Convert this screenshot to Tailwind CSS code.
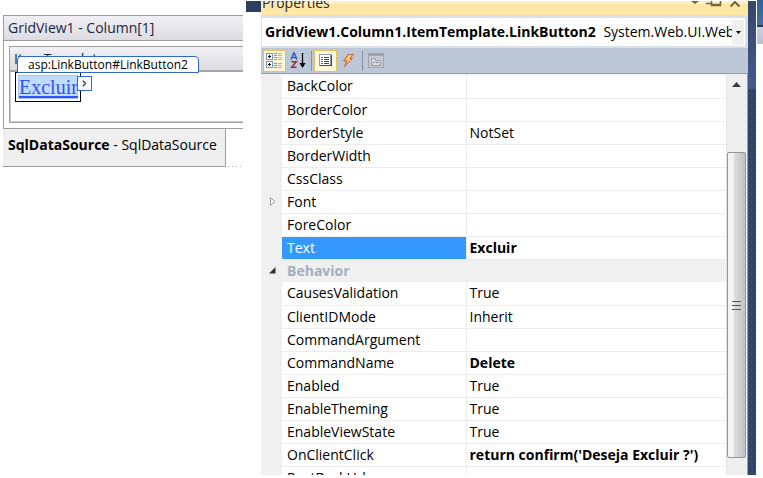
<!DOCTYPE html>
<html lang="en">
<head>
<meta charset="utf-8">
<title>Properties</title>
<script src="https://cdn.jsdelivr.net/npm/@tailwindcss/browser@4"></script>
</head>
<body class="flex h-screen overflow-hidden bg-white pt-px pb-[3px] font-['Open_Sans','Noto_Sans',sans-serif] text-sm text-black">

<main class="w-[246px] shrink-0 pt-[14px] pl-[3px] pr-[3px]">
  <section class="border border-r-0 border-[#9d9d9d]">
    <h1 class="h-[25px] border-b border-[#9d9d9d] bg-linear-to-b from-[#f1f1f5] to-[#dcdce0] pl-1 text-sm leading-6 text-[#1c2440]">GridView1 - Column[1]</h1>
    <div class="pt-[5px] pb-[5px] pl-[5px]">
      <div class="relative border border-r-0 border-[#9d9d9d]">
        <h2 class="h-[25px] border-b-2 border-[#a5a5a5] bg-linear-to-b from-[#f1f1f5] to-[#dcdce0] pl-1 text-sm leading-6 text-[#1c2440]">ItemTemplate</h2>
        <div class="h-[50px] border-b border-l border-[#d0d0d0] pl-1">
          <div class="relative h-[30px] w-[66px] border border-black p-[2px]">
            <a href="#" class="block h-6 border border-[#a3c6ee] bg-[#bfdcfd] font-['Liberation_Serif',serif] text-xl leading-[22px] text-[#3352ff] underline underline-offset-2">Excluir</a>
            <button type="button" aria-label="Smart tasks" class="absolute top-[3px] left-[61px] flex size-[15px] items-center justify-center border border-[#316ac5] bg-[#f7f9fc]">
              <svg width="5" height="7" viewBox="0 0 5 7" fill="none" stroke="#26385c" stroke-width="1.2"><path d="M.8.8 3.6 3.5.8 6.2"/></svg>
            </button>
          </div>
        </div>
        <div class="absolute top-[9px] left-[7px] h-[17px] w-[182px] rounded-t border border-[#316ac5] bg-white text-center text-xs leading-[15px] whitespace-nowrap">asp:LinkButton#LinkButton2</div>
      </div>
    </div>
  </section>
  <div class="flex items-end gap-[2px]">
    <section class="h-[38px] w-[223px] shrink-0 border-r border-b border-[#9d9d9d] bg-[#efefef] pl-[5px] leading-8 whitespace-nowrap"><b>SqlDataSource</b> - SqlDataSource</section>
    <div class="h-px w-[13px] bg-[repeating-linear-gradient(to_right,#b8b8b8_0_1px,transparent_1px_4px)]"></div>
  </div>
</main>

<div class="h-[11px] w-[15px] shrink-0 bg-[#2c3e60]"></div>

<aside class="flex min-w-0 flex-1 flex-col overflow-hidden bg-[#d9e0ea]">
  <header class="flex h-[14px] shrink-0 items-start justify-between overflow-hidden bg-linear-to-b from-[#fff3c8] to-[#ffe8a6] to-30% pr-[6px] pl-px">
    <h2 class="-mt-2 text-sm leading-5 text-[#26282c]">Properties</h2>
    <svg width="52" height="7" viewBox="0 0 52 7" fill="none" stroke="#75633d"><path d="M1 0h8L5 3z" fill="#75633d" stroke="none"/><path d="M16 2.500h5M21.500 0v4.500h9V0M22 3.500h8" stroke-width="1.500"/><path d="M40.500 5.500 45 1l4.500 4.500" stroke-width="2"/></svg>
  </header>

  <div class="mt-[3px] mr-[3px] mb-[2px] ml-px flex h-7 shrink-0 items-center bg-white">
    <button type="button" class="flex h-full w-full items-center overflow-hidden pl-[3px] text-left">
      <span class="min-w-0 flex-1 overflow-hidden whitespace-nowrap"><b class="mr-1">GridView1.Column1.ItemTemplate.LinkButton2</b> System.Web.UI.WebControls.LinkButton</span>
      <span class="mr-px flex h-[25px] w-3 shrink-0 items-center justify-center bg-[#f0f0f0]"><svg width="5" height="3" viewBox="0 0 5 3"><path d="M0 0h5L2.500 3z"/></svg></span>
    </button>
  </div>

  <div class="flex h-[25px] shrink-0 items-center bg-[#bcc7d8] pl-[2px]">
    <button type="button" aria-label="Categorized" class="flex h-[22px] w-[23px] items-center justify-center border border-[#e5c365] bg-[#fff7da]">
      <svg width="17" height="17" viewBox="0 0 17 17" fill="none" shape-rendering="crispEdges"><g stroke="#6d9ad0" fill="#fff"><rect x=".5" y="1.500" width="6" height="6"/><rect x=".5" y="9.500" width="6" height="6"/></g><path d="M2 4.500h3M3.500 3v3M2 12.500h3M3.500 11v3" stroke="#111"/><path d="M8 1.500h3M8 3.500h3M8 5.500h3M8 7.500h3M8 11.500h3M8 13.500h3M8 15.500h3" stroke="#8496b2"/><path d="M12 1.500h4M12 3.500h4M12 5.500h4M12 7.500h4M12 11.500h4M12 13.500h4M12 15.500h4" stroke="#a7b3c6"/></svg>
    </button>
    <button type="button" aria-label="Alphabetical" class="ml-px flex h-[22px] w-[22px] items-center justify-center">
      <svg width="17" height="17" viewBox="0 0 17 17" fill="none"><path d="M1 7.500 3.700 1h.6L7 7.500M2 5.500h4" stroke="#315bb5" stroke-width="1.400"/><path d="M1.500 9.700h4.800L1.500 15.300h5" stroke="#a22c3c" stroke-width="1.500"/><path d="M12.500 1v13" stroke="#000" stroke-width="1.300"/><path d="M9.500 11h6l-3 5z" fill="#000"/></svg>
    </button>
    <span class="mx-[2px] h-5 w-px bg-[#8591a2]"></span>
    <button type="button" aria-label="Properties" class="flex h-[22px] w-[23px] items-center justify-center border border-[#e5c365] bg-[#fff7da]">
      <svg width="13" height="13" viewBox="0 0 13 13" fill="none" shape-rendering="crispEdges"><rect x=".5" y=".5" width="11" height="11" fill="#fff" stroke="#8a9ab5"/><path d="M1 11.500h11.500V1" stroke="#354762"/><path d="M2 3.500h2M2 5.500h2M2 7.500h2M2 9.500h2" stroke="#4266b0"/><path d="M5 3.500h5M5 5.500h5M5 7.500h5M5 9.500h5" stroke="#444"/></svg>
    </button>
    <button type="button" aria-label="Events" class="flex size-[22px] items-center justify-center">
      <svg width="11" height="13" viewBox="0 0 11 13"><path d="M5 .5h5.500L7 4.500h2.500L1.500 12.500 3.500 7H.5z" fill="#f09a3c" stroke="#b8604c" stroke-width=".8"/><path d="M6 1.500 3 6h2.500L4 9.500 7.500 5.500H5L8.500 1.300z" fill="#ffe984"/></svg>
    </button>
    <span class="mr-[5px] ml-[3px] h-5 w-px bg-[#8591a2]"></span>
    <button type="button" disabled aria-label="Property pages">
      <svg width="16" height="15" viewBox="0 0 16 15" fill="none" shape-rendering="crispEdges"><rect x=".5" y=".5" width="15" height="14" fill="#c6c9cf" stroke="#a0a5ad"/><path d="M1 2h14" stroke="#a0a5ad" stroke-width="2"/><path d="M3.500 12.500v-7h4v2h5v5z" fill="#d5d8dc" stroke="#9da3ac"/><path d="M5 9.500h2M8 9.500h3" stroke="#868d97"/></svg>
    </button>
  </div>

  <div class="flex min-h-0 flex-1 border-t border-r border-[#9d9d9d] bg-[#f0f0f0] pt-px">
    <div class="min-w-0 flex-1 overflow-hidden">
      <table class="w-full table-fixed border-collapse text-left leading-[22px] whitespace-nowrap [&_td]:border-b [&_td]:border-[#ededed] [&_td]:bg-white [&_td]:p-0 [&_td]:pl-[3px] [&_th]:p-0 [&_th]:font-normal [&_tr]:h-[23px]">
        <colgroup><col class="w-[21px]"><col class="w-[184px]"><col></colgroup>
        <tbody class="[&_th+th]:border-r [&_th+th]:border-b [&_th+th]:border-[#ededed] [&_th+th]:bg-white [&_th+th]:pl-[5px]">
          <tr><th></th><th scope="row">BackColor</th><td></td></tr>
          <tr><th></th><th scope="row">BorderColor</th><td></td></tr>
          <tr><th></th><th scope="row">BorderStyle</th><td>NotSet</td></tr>
          <tr><th></th><th scope="row">BorderWidth</th><td></td></tr>
          <tr><th></th><th scope="row">CssClass</th><td></td></tr>
          <tr><th><button type="button" aria-label="Expand Font" class="ml-[9px] block"><svg width="6" height="9" viewBox="0 0 6 9"><path d="M.5.700v7.600L5 4.500z" fill="#fff" stroke="#999"/></svg></button></th><th scope="row">Font</th><td></td></tr>
          <tr><th></th><th scope="row">ForeColor</th><td></td></tr>
          <tr><th></th><th scope="row" class="bg-[#3399ff]! text-white">Text</th><td class="font-bold">Excluir</td></tr>
        </tbody>
        <tbody>
          <tr><th><button type="button" aria-label="Collapse Behavior" class="ml-2 block"><svg width="7" height="7" viewBox="0 0 7 7"><path d="M6.500 0v6.500H0z" fill="#333"/></svg></button></th><th colspan="2" scope="rowgroup" class="pl-[5px]! font-bold! text-[#a3aebd]">Behavior</th></tr>
        </tbody>
        <tbody class="[&_th+th]:border-r [&_th+th]:border-b [&_th+th]:border-[#ededed] [&_th+th]:bg-white [&_th+th]:pl-[5px]">
          <tr><th></th><th scope="row">CausesValidation</th><td>True</td></tr>
          <tr><th></th><th scope="row">ClientIDMode</th><td>Inherit</td></tr>
          <tr><th></th><th scope="row">CommandArgument</th><td></td></tr>
          <tr><th></th><th scope="row">CommandName</th><td class="font-bold">Delete</td></tr>
          <tr><th></th><th scope="row">Enabled</th><td>True</td></tr>
          <tr><th></th><th scope="row">EnableTheming</th><td>True</td></tr>
          <tr><th></th><th scope="row">EnableViewState</th><td>True</td></tr>
          <tr><th></th><th scope="row">OnClientClick</th><td class="font-bold">return confirm('Deseja Excluir ?')</td></tr>
          <tr><th></th><th scope="row">PostBackUrl</th><td></td></tr>
        </tbody>
      </table>
    </div>
    <div class="flex w-[21px] shrink-0 flex-col border-l border-[#e3e3e3] bg-[#efefef] pr-px pb-[17px]">
      <button type="button" aria-label="Scroll up" class="flex h-[77px] shrink-0 justify-center pt-[7px]"><svg width="9" height="5" viewBox="0 0 9 5"><path d="M4.500 0 9 5H0z" fill="#3a3a3a"/></svg></button>
      <div class="flex flex-1 flex-col items-center justify-center gap-[3px] rounded-xs border border-[#959595] bg-linear-to-r from-[#f4f4f4] from-30% via-[#dadbde] via-40% to-[#c2c3c7]">
        <span class="h-px w-[9px] bg-[#555]"></span><span class="h-px w-[9px] bg-[#555]"></span><span class="h-px w-[9px] bg-[#555]"></span>
      </div>
    </div>
  </div>
</aside>

<div class="w-2 shrink-0 bg-[radial-gradient(#2b3d60_1px,transparent_1px)] bg-[size:4px_4px] bg-[#35496a]">
  <div class="h-[88px] bg-linear-to-b from-[#33466c] to-[#465a8c]"></div>
</div>
<div class="-mt-px ml-px w-[6px] shrink-0">
  <div class="h-[25px] bg-linear-to-b from-[#356096] to-[#42719f]"></div>
  <div class="h-[2px] bg-[#27385a]"></div>
  <div class="h-[17px] bg-linear-to-b from-[#cbd3e2] to-[#b6c1d8]"></div>
</div>
</body>
</html>
